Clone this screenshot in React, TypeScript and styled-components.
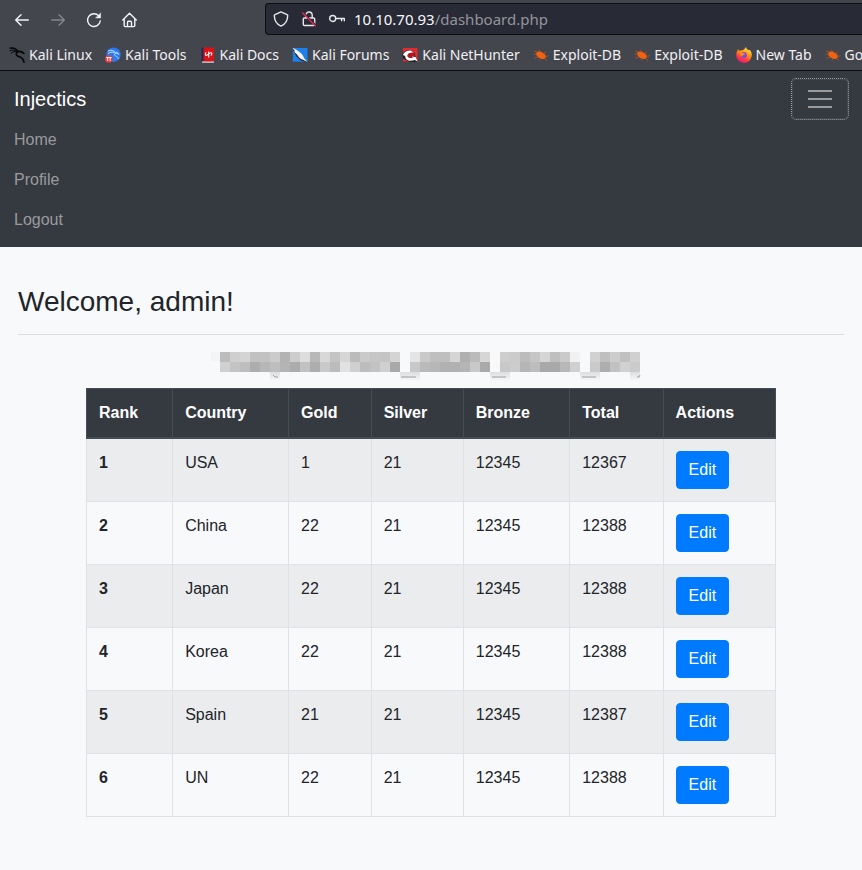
import React from 'react';
import styled, { createGlobalStyle } from 'styled-components';

const GlobalStyle = createGlobalStyle`
  *, *::before, *::after { box-sizing: border-box; }
  html, body { margin: 0; min-height: 100vh; background: #f8f9fb; }
  body {
    color: #212529;
    font: 16px/24px "Liberation Sans", Arial, sans-serif;
    overflow-x: hidden;
  }
`;

const Chrome = styled.header`
  background: #44464e;
  border-bottom: 1px solid #0d0d12;
  color: #f0f0f2;
  font-family: "Noto Sans", sans-serif;
  overflow: hidden;
`;

const Toolbar = styled.div`
  display: flex;
  align-items: flex-start;
  height: 39px;
  padding-left: 4px;
`;

const ToolButton = styled.button`
  display: flex;
  align-items: center;
  justify-content: center;
  width: 36px;
  height: 39px;
  padding: 0;
  border: 0;
  background: none;
  color: #f4f4f6;

  &:disabled { color: #85868c; }
`;

const AddressBar = styled.div`
  flex: 1;
  display: flex;
  align-items: center;
  height: 32px;
  margin: 3px 0 0 117px;
  padding-left: 7px;
  border: 1px solid #0d0e14;
  border-right: 0;
  border-radius: 4px 0 0 4px;
  background: #282a36;
`;

const AddressIcons = styled.div`
  display: flex;
  gap: 12px;
  color: #e8e8ec;
  margin-right: 9px;
`;

const Address = styled.div`
  font-size: 15px;
  line-height: 20px;
  color: #94959b;
`;

const Host = styled.span`
  color: #f8f8fa;
`;

const Bookmarks = styled.nav`
  display: flex;
  align-items: center;
  gap: 13px;
  height: 31px;
  padding-left: 9px;
  white-space: nowrap;
`;

const Bookmark = styled.a`
  display: flex;
  flex: none;
  align-items: center;
  gap: 4px;
  color: inherit;
  font-size: 14px;
  line-height: 20px;
  text-decoration: none;
`;

const Navbar = styled.nav`
  padding: 8px 14px;
  background: #353940;
`;

const NavHead = styled.div`
  display: flex;
  align-items: center;
  justify-content: space-between;
`;

const Brand = styled.a`
  color: #fff;
  font-size: 20px;
  line-height: 30px;
  text-decoration: none;
`;

const Toggler = styled.button`
  display: flex;
  align-items: center;
  justify-content: center;
  width: 56px;
  height: 40px;
  padding: 0;
  border: 1px solid #43474d;
  border-radius: 4px;
  outline: 1px dotted #a0a2a5;
  background: none;
  color: #9a9c9f;
`;

const NavList = styled.ul`
  margin: 0;
  padding: 0;
  list-style: none;
`;

const NavLink = styled.a`
  display: block;
  padding: 9px 0 7px;
  color: #999b9d;
  text-decoration: none;
`;

const Main = styled.main`
  padding: 38px 18px;
`;

const Title = styled.h1`
  margin: 0;
  padding-bottom: 15px;
  border-bottom: 1px solid #dcdee0;
  font-size: 28px;
  font-weight: 400;
  line-height: 34px;
`;

const Board = styled.section`
  max-width: 690px;
  margin: 17px auto 0;
`;

const Redacted = styled.svg`
  display: block;
  margin: 0 auto;
`;

const Table = styled.table`
  width: 100%;
  margin-top: 4px;
  border-collapse: collapse;
`;

const HeadCell = styled.th`
  padding: 12px;
  border: 1px solid #454d55;
  border-bottom-width: 2px;
  background: #353940;
  color: #fff;
  text-align: left;
  vertical-align: bottom;
`;

const Row = styled.tr`
  &:nth-child(odd) { background: #ebecee; }
`;

const Cell = styled.td`
  padding: 12px;
  border: 1px solid #dee2e6;
  text-align: left;
  vertical-align: top;
`;

const EditButton = styled.button`
  display: block;
  padding: 6px 12px;
  border: 1px solid #007bff;
  border-radius: 4px;
  background: #007bff;
  color: #fff;
  font: inherit;
`;

const stroke = { fill: 'none', stroke: 'currentColor', strokeWidth: 1.4, strokeLinecap: 'round', strokeLinejoin: 'round' } as const;

const BackIcon = () => (
  <svg width="16" height="16" viewBox="0 0 16 16" {...stroke}><path d="M14.3 8H1.8M7 2.7 1.7 8 7 13.3" /></svg>
);
const ForwardIcon = () => (
  <svg width="16" height="16" viewBox="0 0 16 16" {...stroke}><path d="M1.7 8h12.5M9 2.7 14.3 8 9 13.3" /></svg>
);
const ReloadIcon = () => (
  <svg width="16" height="16" viewBox="0 0 16 16" {...stroke}>
    <path d="M14.3 9A6.4 6.4 0 1 1 12.8 3.9" /><path d="M14.6 1.2v4.7H9.9z" fill="currentColor" strokeWidth="0.5" />
  </svg>
);
const HomeIcon = () => (
  <svg width="16" height="16" viewBox="0 0 16 16" {...stroke}>
    <path d="M.8 8 7.500 1.300 14.300 8M2.200 7v6.500c0 .7.4 1.100 1.100 1.100h8.400c.7 0 1.100-.4 1.100-1.100V7" /><path d="M5.500 14.300v-4c0-.7.4-1 1-1h2c.6 0 1 .3 1 1v4" />
  </svg>
);
const ShieldIcon = () => (
  <svg width="16" height="16" viewBox="0 0 16 16" {...stroke}>
    <path d="M8 .9 14 3.6c.5.2.7.5.7.9 0 4.900-2.200 8.600-6.700 10.600C3.500 13.100 1.300 9.400 1.300 4.500c0-.4.2-.7.7-.9z" />
  </svg>
);
const LockIcon = () => (
  <svg width="16" height="16" viewBox="0 0 16 16" {...stroke}>
    <path d="M4.800 7V4.200a3.200 3.200 0 0 1 6.400 0V7M3.500 7h9c.8 0 1.200.4 1.200 1.200v5.100c0 .8-.4 1.200-1.200 1.200h-9c-.8 0-1.200-.4-1.200-1.200V8.200C2.300 7.400 2.700 7 3.500 7z" />
    <path d="M2.500 1.800 15.200 14.600" stroke="#282a36" strokeWidth="1.400" />
    <path d="M1.500 1.800 14.500 15" stroke="#e22850" />
  </svg>
);
const KeyIcon = () => (
  <svg width="16" height="16" viewBox="0 0 16 16" {...stroke}>
    <circle cx="3.700" cy="7.500" r="3" /><path d="M6.900 7.500h8.400v2.300M12.600 7.700v2" />
  </svg>
);
const MenuIcon = () => (
  <svg width="30" height="30" viewBox="0 0 30 30" stroke="currentColor" strokeWidth="2" aria-hidden="true">
    <path d="M3 7h24M3 15h24M3 23h24" />
  </svg>
);

const LinuxIcon = () => (
  <svg width="16" height="16" viewBox="0 0 16 16" fill="none" stroke="#08090a" strokeLinecap="round">
    <path d="M.8 1.200C4 .6 7 1.500 9 4.200" strokeWidth="1.300" />
    <path d="M1 3.600C3.500 2.600 6 3 8.500 4.500M2 6.200C4 4.400 6 4.200 8.500 4.800" strokeWidth="1" />
    <path d="M13.800 5.800C11.500 4.300 9 4 7.800 5.600 6.500 7.500 8 9.300 10.500 9.800c2.300.5 3.800 2 4.500 5.400" strokeWidth="1.700" />
    <path d="M10 4.800c1.500-.8 3.200-.2 5.200 1.900" strokeWidth="1.200" />
  </svg>
);
const ToolsIcon = () => (
  <svg width="16" height="16" viewBox="0 0 16 16">
    <circle cx="8.500" cy="7.700" r="7.200" fill="#2879f2" />
    <path d="M3 4c3-1.300 5.800-.6 7.300 1.300 1.700 0 2.700.6 3.700 2-1.600-1-3.500-1.400-4.400-.5-.8 1 .2 1.800 1.500 2.300 1.300.6 2 1.600 2.300 3M3 6.500c2-1.300 4-1.500 6.500-1" fill="none" stroke="#d5e6ff" strokeWidth=".9" />
    <circle cx="3.800" cy="12" r="3.800" fill="#e83d43" />
    <path d="M1.300 10.500h5.200M2.700 10.500v3.500M5.200 10.500v3.500" stroke="#fff" fill="none" />
  </svg>
);
const DocsIcon = () => (
  <svg width="16" height="16" viewBox="0 0 16 16">
    <path d="M2.500.5h11.500v14H2.500z" fill="#da1216" /><path d="M1.500.5h2v14h-2z" fill="#22265b" /><path d="M2 14.500h12v1.200H2z" fill="#e8dfdf" />
    <path d="M6.200 5.500c-1.500 1.500-1 3.300.6 2.800l3.500-2.400c1.700-.6 2.200 1.200.6 2.800M8.700 4.600v5.800" stroke="#fff" strokeWidth="1.100" fill="none" />
  </svg>
);
const ForumsIcon = () => (
  <svg width="16" height="16" viewBox="0 0 16 16">
    <path d="M.8 1h14.700v13.700H.8z" fill="#1e80ed" />
    <path d="M0 1.500 4.500 9.500 9 13.500 15.500 15.500 11 10z" fill="#24262a" />
    <path d="M.5.8 4.800 3 8.500 5.800c1.800 1.700 2.900 3.200 3.500 5.200l3.500 4-4.500-2.200C8.200 12 6.200 10 5.200 7.800L1.500 4.300l1.800.2z" fill="#f5f5f5" />
  </svg>
);
const HunterIcon = () => (
  <svg width="16" height="16" viewBox="0 0 16 16">
    <path d="M1 1h14.500v13.500H1z" fill="#e52931" />
    <path d="M0 7.500C2 4 5 2.500 8.500 3l4 2.500 2.500 9.500H8L1.500 12z" fill="#202126" />
    <path d="M.8 8C2.500 4.800 5 3.200 8.800 3.600l3.400 2.400C8.500 5.200 6 6 5.600 8.200c-.4 2.300 2.500 3.200 5 2.600L9.600 9.300l4 .6 2 4.600-2.800-1.500C7.500 15 3 13 3.200 9z" fill="#fff" />
    <path d="M5.600 8.200c.4-2.200 2.900-3 6.600-2.200l1 3.600-3.600-.3 1 1.500c-2.500.6-5.400-.3-5-2.600z" fill="#b9151e" />
  </svg>
);
const ExploitIcon = () => (
  <svg width="16" height="16" viewBox="0 0 16 16">
    <ellipse cx="8" cy="8.300" rx="5.300" ry="3.100" transform="rotate(28 8 8.300)" fill="#f26110" />
    <path d="m4 5-3-1m3 3-3.500.2M5 10l-3.500 1.200M8 5 6 2.700M11 7l1.500-2.500M12 9.500l3.500-.7M11 11.300l3 2.200M8 11l-1 2.300" stroke="#b6571f" strokeWidth=".8" />
  </svg>
);
const FirefoxIcon = () => (
  <svg width="16" height="16" viewBox="0 0 16 16">
    <defs>
      <linearGradient id="flame" x1=".8" y1="0" x2=".3" y2="1">
        <stop offset="0" stopColor="#fff44f" /><stop offset=".4" stopColor="#ff980e" /><stop offset=".75" stopColor="#ff3647" /><stop offset="1" stopColor="#e31587" />
      </linearGradient>
    </defs>
    <path d="M10 0c.2 1.700 1.300 2.300 2.600 3.300 1-.1 1.200-.6 1.200-.6 1.300 1.500 2 3.400 2 5.500A7.800 7.800 0 0 1 .2 8C.2 5.700 1 3.800 2.500 2l.4 2c1-.6 2-.8 3-.6C7.500 3.600 8.600 1.500 10 0z" fill="url(#flame)" />
    <circle cx="7.800" cy="8" r="3.100" fill="#8248dc" />
    <path d="M3.400 5.300c1.600-.6 3.200-.2 4.200 1 .9.100 1.400.5 1.400 1.100-1.800.1-2.800 1-2.700 2.200-2-.4-3-2.100-2.900-4.300z" fill="#ff8b16" />
  </svg>
);

const bookmarks = [
  { label: 'Kali Linux', Icon: LinuxIcon },
  { label: 'Kali Tools', Icon: ToolsIcon },
  { label: 'Kali Docs', Icon: DocsIcon },
  { label: 'Kali Forums', Icon: ForumsIcon },
  { label: 'Kali NetHunter', Icon: HunterIcon },
  { label: 'Exploit-DB', Icon: ExploitIcon },
  { label: 'Exploit-DB', Icon: ExploitIcon },
  { label: 'New Tab', Icon: FirefoxIcon },
  { label: 'Google Hacking DB', Icon: ExploitIcon },
];

/* Grey levels of the pixelated strip, one entry per tile; "--" is a gap. */
const tiles = [
  'bc cf d4 c1 c2 cb b3 cd dd b8 d8 c4 d6 bb ca c6 c5 d4 -- e5 c9 bf bf d5 b0 bb d6 -- ce cb bc c6 d5 bf ca f1 -- d1 bf cd c0 d0',
  'd0 c4 be ad b7 be b4 ac c2 ad c9 bc e2 d0 bd c3 d0 a9 -- c8 ba b7 b1 b1 b5 c9 aa -- c8 cc b6 bd a9 a9 b8 d0 -- ca ae c2 d1 cb',
].map((line) => line.split(' '));

const RedactedText = () => (
  <Redacted width="442" height="32" viewBox="-10 0 442 32" role="img" aria-label="Redacted">
    <defs>
      <linearGradient id="fade" x1="0" y1="0" x2="0" y2="1">
        <stop offset="0" stopColor="#dcdddf" /><stop offset="1" stopColor="#f8f9fb" />
      </linearGradient>
    </defs>
    {tiles.map((line, y) =>
      line.map((level, x) =>
        level === '--' ? null : (
          <rect key={`${x}-${y}`} x={x * 10} y={y * 10} width="10" height="10" fill={`#${level}${level}${level}`} shapeRendering="crispEdges" />
        ),
      ),
    )}
    <path d="M-9 0h9v9h-9z" fill="#f3f4f5" />
    <path d="M50 20h10v9H50zM180 20h20v9h-20zM270 20h20v9h-20zM360 20h20v9h-20zM410 20h10v9h-10z" fill="url(#fade)" />
    <path d="M181 25h15M272 25h14M362 25h14M53 23l2 2h3M417 25h2l1-2" fill="none" stroke="#9c9d9f" />
  </Redacted>
);

const columns = ['Rank', 'Country', 'Gold', 'Silver', 'Bronze', 'Total', 'Actions'];
const standings = [
  ['USA', 1, 21, 12345, 12367],
  ['China', 22, 21, 12345, 12388],
  ['Japan', 22, 21, 12345, 12388],
  ['Korea', 22, 21, 12345, 12388],
  ['Spain', 21, 21, 12345, 12387],
  ['UN', 22, 21, 12345, 12388],
];

export default function App() {
  return (
    <>
      <GlobalStyle />
      <Chrome>
        <Toolbar>
          <ToolButton aria-label="Back"><BackIcon /></ToolButton>
          <ToolButton aria-label="Forward" disabled><ForwardIcon /></ToolButton>
          <ToolButton aria-label="Reload"><ReloadIcon /></ToolButton>
          <ToolButton aria-label="Home"><HomeIcon /></ToolButton>
          <AddressBar>
            <AddressIcons><ShieldIcon /><LockIcon /><KeyIcon /></AddressIcons>
            <Address><Host>10.10.70.93</Host>/dashboard.php</Address>
          </AddressBar>
        </Toolbar>
        <Bookmarks aria-label="Bookmarks">
          {bookmarks.map(({ label, Icon }, i) => (
            <Bookmark key={i} href="#"><Icon />{label}</Bookmark>
          ))}
        </Bookmarks>
      </Chrome>
      <Navbar>
        <NavHead>
          <Brand href="#">Injectics</Brand>
          <Toggler aria-label="Toggle navigation" aria-expanded="true"><MenuIcon /></Toggler>
        </NavHead>
        <NavList>
          {['Home', 'Profile', 'Logout'].map((label) => (
            <li key={label}><NavLink href="#">{label}</NavLink></li>
          ))}
        </NavList>
      </Navbar>
      <Main>
        <Title>Welcome, admin!</Title>
        <Board>
          <RedactedText />
          <Table>
            <thead>
              <tr>{columns.map((name) => <HeadCell key={name} scope="col">{name}</HeadCell>)}</tr>
            </thead>
            <tbody>
              {standings.map((values, i) => (
                <Row key={i}>
                  <Cell as="th" scope="row">{i + 1}</Cell>
                  {values.map((value, j) => <Cell key={j}>{value}</Cell>)}
                  <Cell><EditButton>Edit</EditButton></Cell>
                </Row>
              ))}
            </tbody>
          </Table>
        </Board>
      </Main>
    </>
  );
}
